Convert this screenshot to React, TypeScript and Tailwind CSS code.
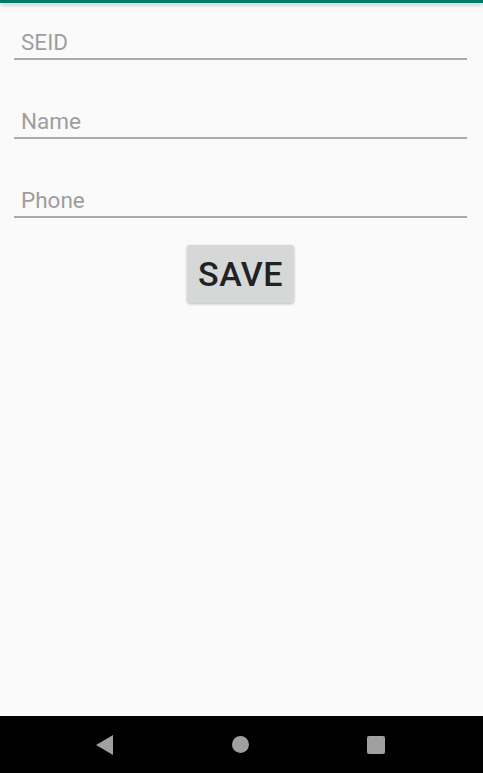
const fields = ["SEID", "Name", "Phone"];

const App = () => {
  return (
    <div className="w-[483px] h-[773px] flex flex-col bg-[#fafafa] font-['Roboto',sans-serif] overflow-hidden">
      <div className="h-[3px] bg-[#00796b] shadow-[0_2px_4px_rgba(0,0,0,0.25)]" />
      <div className="flex-1 flex flex-col pl-[14px] pr-[16px] pt-[12px] gap-[34px]">
        {fields.map((f) => (
          <div key={f} className="h-[45px] flex flex-col justify-end">
            <div className="border-b-2 border-[#aaaaaa] pl-[7px] pb-[1px]">
              <span className="text-[22.5px] leading-[28px] text-[#9e9e9e]">{f}</span>
            </div>
          </div>
        ))}
        <div className="flex justify-center -mt-[7px]">
          <button className="w-[107px] h-[58px] bg-[#d6d7d7] rounded-[3px] shadow-[0_1px_3px_rgba(0,0,0,0.25)] text-[34px] font-medium text-[#222222] tracking-[0.5px]">
            SAVE
          </button>
        </div>
      </div>
      <div className="h-[57px] bg-black flex items-center justify-center gap-[118px] pr-[2px]">
        <svg width="18" height="20" viewBox="0 0 18 20">
          <polygon points="17,0 17,20 0,10" fill="#a0a0a0" />
        </svg>
        <div className="w-[17px] h-[17px] rounded-full bg-[#a0a0a0]" />
        <div className="w-[18px] h-[18px] rounded-[2px] bg-[#a0a0a0]" />
      </div>
    </div>
  );
};

export default App;
